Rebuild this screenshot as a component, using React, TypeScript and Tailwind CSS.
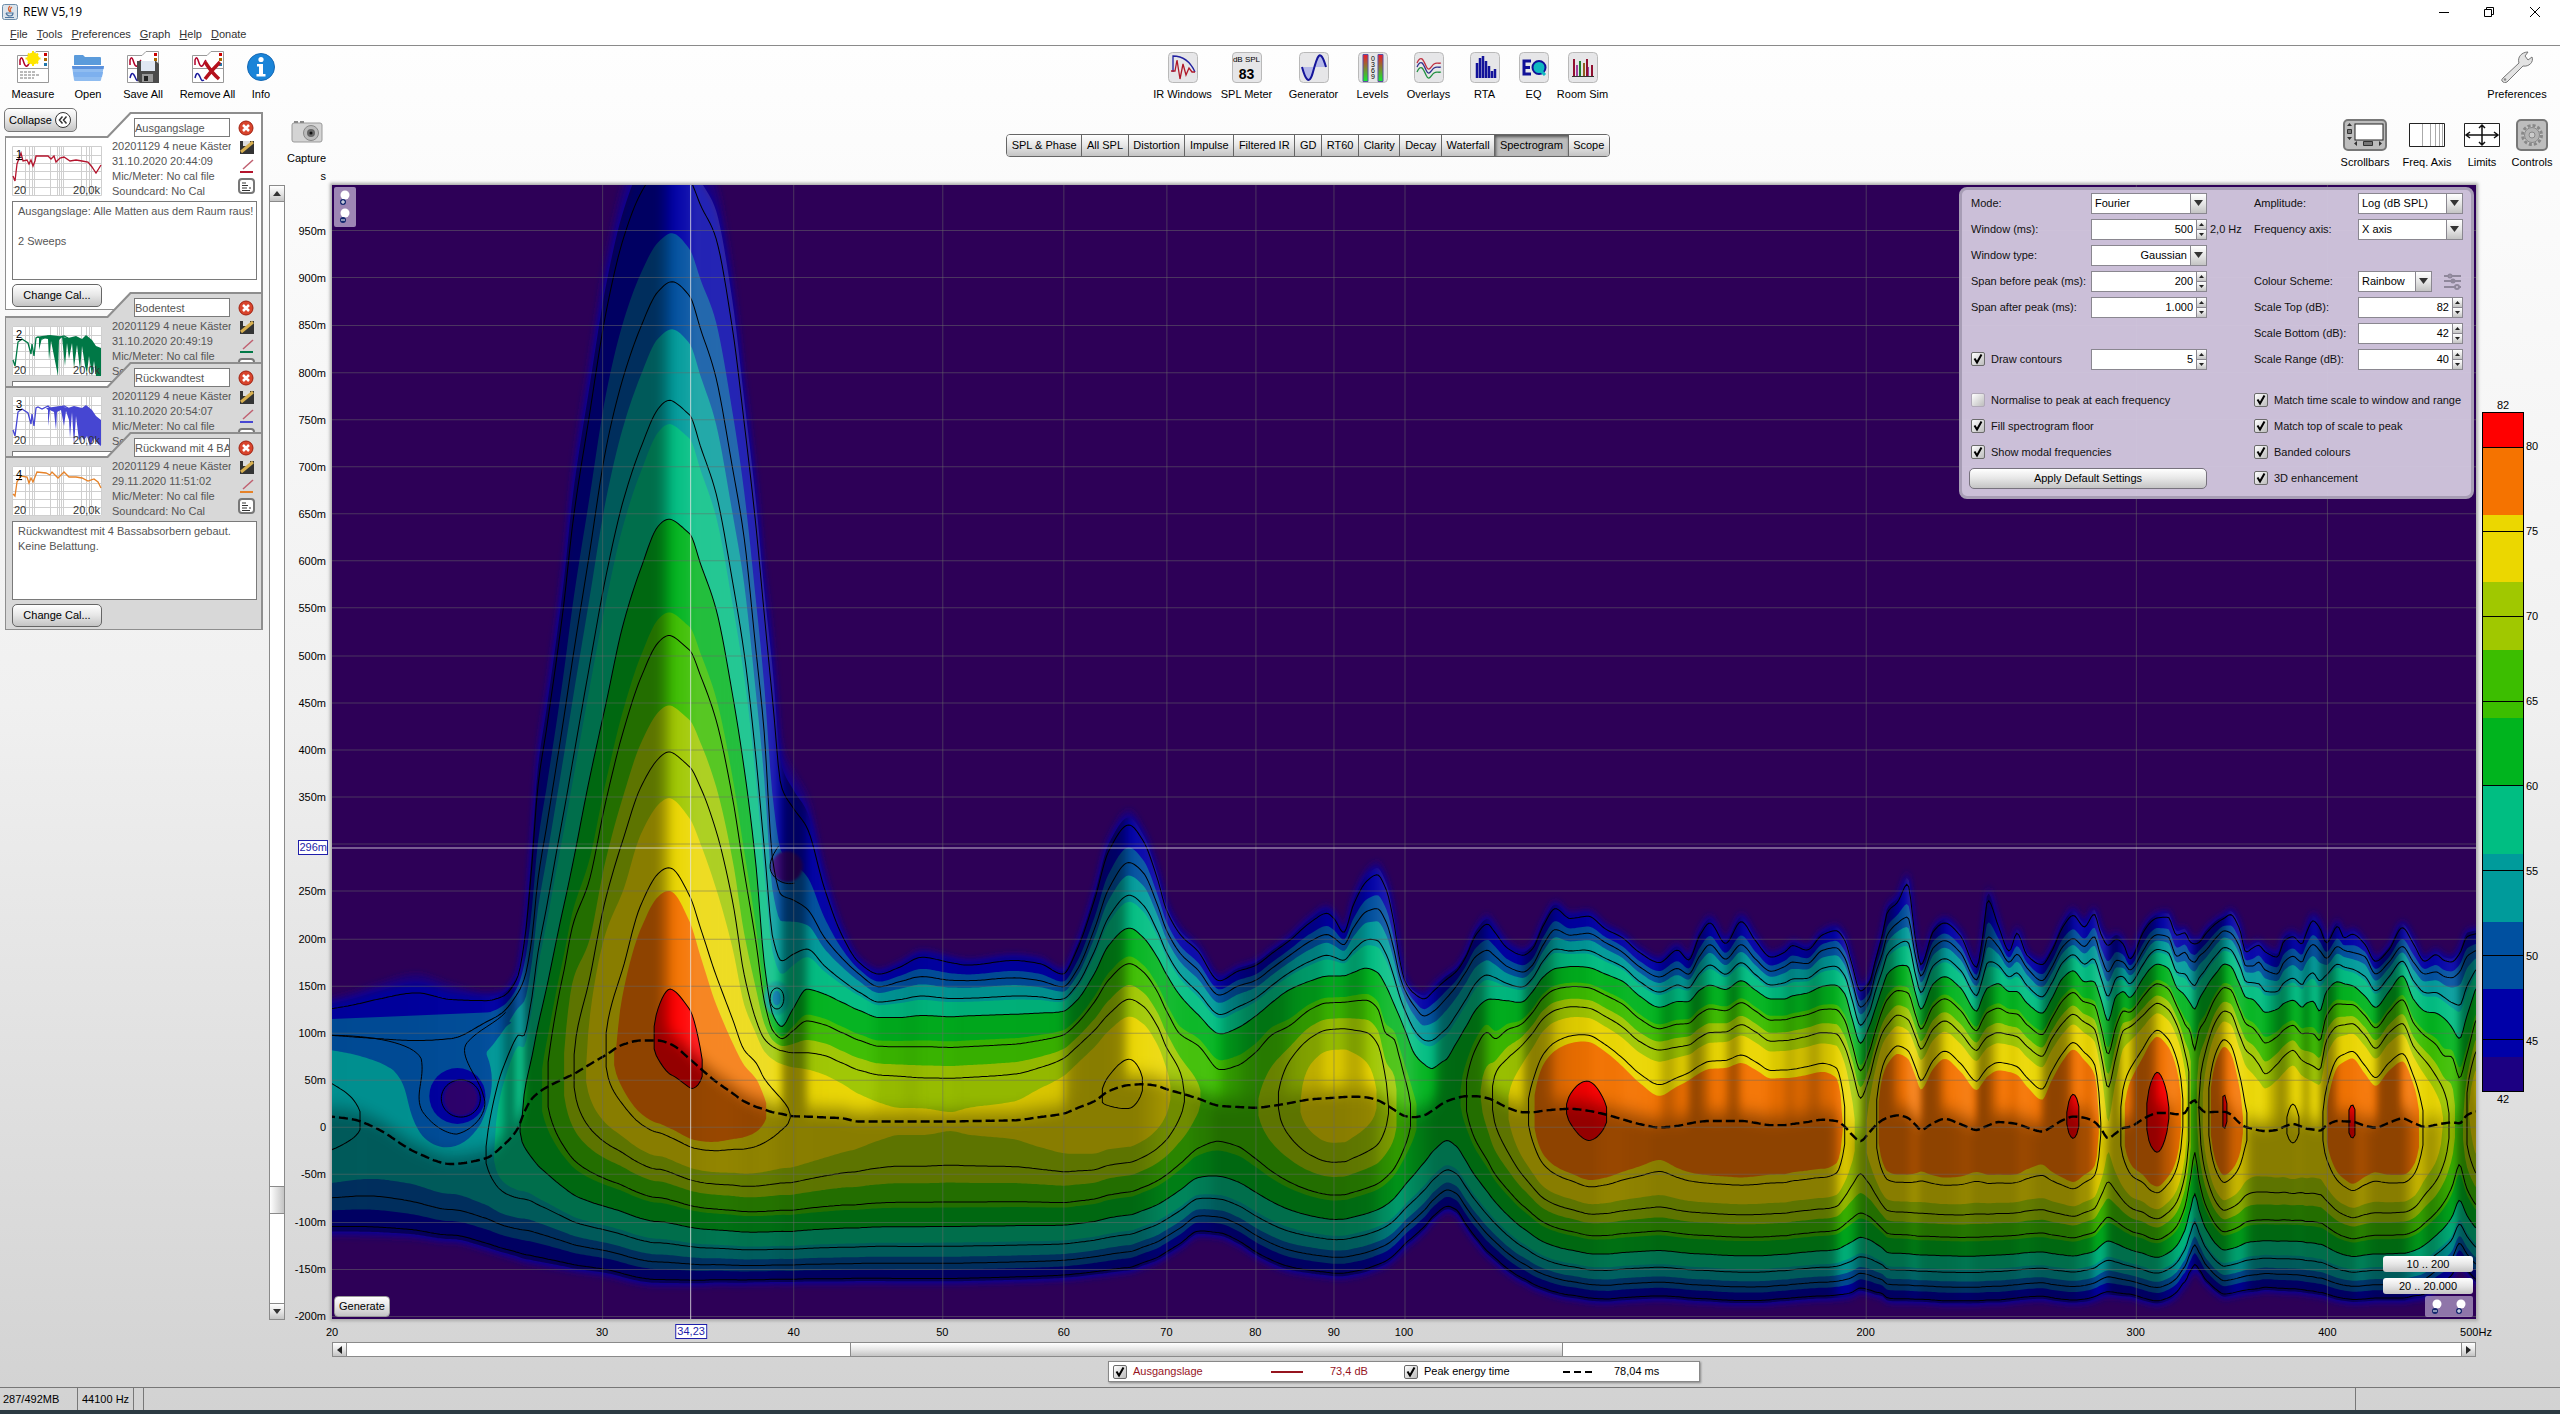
import { useId, type ReactNode } from 'react'

/* ---------- spectrogram data ---------- */

const W = 2143
const H = 1133

// x, ridge, peak dB, top of 43 / 50 / 60 / 70 dB, bottom of 43 dB, top of 76 dB
type Row = number[]
type Tile = { x0: number; y0: number; sx: number; sy: number; rows: Row[] }

const TILES: Tile[] = [
  {
    x0: -13, y0: 594, sx: 1.742, sy: 2.473,
    rows: [
      [22, 833, 56, 540, 632, 0, 0, 1128],
      [60, 840, 55.3, 525, 636, 0, 0, 1129],
      [100, 862, 54.5, 505, 640, 0, 0, 1130],
      [170, 922, 53.5, 480, 645, 0, 0, 1135],
      [230, 950, 53.5, 505, 640, 0, 0, 1145],
      [290, 936, 55, 525, 600, 0, 0, 1165],
      [320, 905, 57.5, 520, 575, 0, 0, 1178],
      [345, 865, 59.5, 475, 530, 0, 0, 1188],
      [358, 820, 61, 360, 490, 770, 0, 1195],
      [370, 790, 62.4, 150, 400, 690, 0, 1198],
      [381, 775, 63.6, -73, 250, 610, 0, 1201],
      [397, 760, 65.1, -230, 110, 510, 0, 1205],
      [425, 740, 68, -530, -140, 320, 0, 1212],
      [443, 728, 70, -780, -310, 200, 0, 1217],
      [470, 705, 72.6, -1030, -550, 5, 500, 1222],
      [500, 680, 75.1, -1290, -820, -190, 290, 1228],
      [529, 655, 77.2, -1469, -990, -380, 150, 1238, 530],
      [560, 645, 79.2, -1580, -1117, -520, 20, 1248, 370],
      [590, 645, 80.2, -1630, -1205, -625, -50, 1252, 290],
      [614, 655, 80.6, -1650, -1230, -642, -67, 1252, 277],
      [645, 690, 80.6, -1600, -1195, -608, -32, 1252, 350],
      [665, 715, 80.1, -1540, -1110, -530, 22, 1252, 440],
      [690, 745, 79.2, -1480, -1000, -428, 120, 1250, 550],
      [720, 775, 78, -1250, -770, -210, 300, 1250, 650],
      [740, 795, 77.3, -1000, -600, -30, 480, 1250, 705],
      [760, 808, 76.7, -760, -330, 200, 590, 1249],
      [775, 815, 76.2, -530, -120, 450, 640, 1249],
      [790, 822, 75.7, -350, 200, 580, 660, 1248],
      [805, 826, 75.3, -90, 285, 610, 670, 1248],
      [826, 832, 74.9, -20, 298, 565, 675, 1248],
      [850, 833, 74.4, 40, 320, 518, 675, 1247],
      [880, 835, 73.8, 220, 390, 530, 682, 1247],
      [910, 837, 73.3, 360, 440, 550, 700, 1247],
      [940, 845, 72.8, 440, 480, 570, 718, 1246],
      [975, 845, 72.4, 468, 512, 588, 730, 1246],
      [1010, 845, 72.2, 450, 500, 588, 733, 1247],
      [1050, 845, 72.2, 420, 487, 583, 737, 1247],
      [1100, 845, 72.1, 435, 496, 586, 738, 1247],
      [1130, 844, 72.2, 443, 497, 584, 736, 1246],
      [1210, 842, 72.4, 430, 490, 580, 728, 1243],
      [1255, 834, 73, 438, 497, 577, 712, 1241],
      [1295, 826, 73.7, 468, 512, 573, 690, 1238],
      [1320, 812, 74.2, 400, 470, 545, 660, 1235],
      [1350, 795, 74.8, 270, 370, 480, 620, 1230],
      [1375, 770, 75.2, 140, 270, 410, 580, 1226],
      [1410, 755, 75.5, 75, 205, 367, 543, 1220],
      [1435, 753, 75, 120, 230, 390, 560, 1208],
      [1460, 757, 73.8, 220, 310, 440, 610, 1195],
      [1475, 765, 72.7, 300, 370, 480, 660, 1182],
      [1500, 775, 70.6, 365, 430, 535, 725, 1160],
      [1530, 788, 68.3, 405, 470, 580, 0, 1130],
    ],
  },
  {
    x0: 867, y0: 634, sx: 2.24, sy: 2.64,
    rows: [
      [45, 755, 66.7, 410, 463, 565, 0, 1105],
      [85, 758, 66.9, 385, 440, 550, 0, 1125],
      [124, 760, 67.8, 370, 425, 520, 0, 1155],
      [165, 755, 69.5, 335, 390, 480, 0, 1180],
      [200, 748, 71, 305, 360, 450, 640, 1195],
      [250, 738, 73, 250, 320, 425, 575, 1205],
      [285, 735, 73.8, 225, 303, 413, 555, 1210],
      [301, 734, 73.9, 240, 312, 413, 553, 1212],
      [323, 732, 73.9, 285, 330, 412, 552, 1212],
      [345, 731, 73.5, 200, 285, 403, 555, 1208],
      [375, 733, 72.8, 130, 242, 392, 562, 1200],
      [398, 740, 72, 110, 235, 403, 590, 1190],
      [418, 752, 70.5, 150, 270, 440, 690, 1180],
      [435, 765, 69, 240, 340, 485, 0, 1165],
      [448, 775, 67.5, 350, 410, 520, 0, 1150],
      [460, 782, 66.2, 415, 450, 555, 0, 1135],
      [480, 785, 64.6, 445, 490, 615, 0, 1115],
      [503, 780, 63.3, 455, 518, 645, 0, 1090],
      [525, 765, 62.6, 430, 505, 655, 0, 1060],
      [550, 745, 62.4, 405, 475, 635, 0, 1037],
      [575, 735, 63.4, 385, 440, 590, 0, 1045],
      [595, 730, 65, 350, 405, 550, 0, 1080],
      [620, 730, 67.3, 280, 360, 500, 0, 1120],
      [645, 735, 69, 248, 345, 475, 0, 1155],
      [660, 742, 70.4, 270, 358, 474, 680, 1170],
      [690, 760, 72, 320, 388, 478, 630, 1200],
      [725, 772, 74.3, 340, 402, 480, 592, 1225],
      [745, 772, 75.8, 325, 385, 455, 565, 1238],
      [770, 768, 78, 260, 330, 415, 525, 1250],
      [797, 765, 79.3, 213, 290, 393, 503, 1260],
      [830, 763, 80.2, 243, 305, 388, 494, 1268],
      [870, 768, 80.9, 237, 300, 390, 497, 1275],
      [910, 778, 80.1, 275, 325, 408, 520, 1278],
      [945, 790, 79, 295, 348, 425, 545, 1275],
      [985, 803, 78, 335, 388, 465, 585, 1272],
      [1030, 812, 77.2, 362, 415, 495, 608, 1270],
      [1070, 808, 78, 325, 393, 480, 600, 1272],
      [1095, 802, 78.6, 355, 408, 480, 595, 1275],
      [1120, 797, 79, 285, 360, 450, 575, 1277],
      [1143, 795, 79.2, 250, 330, 437, 562, 1278],
      [1178, 795, 79.3, 310, 368, 448, 560, 1281],
      [1213, 795, 79.4, 245, 330, 425, 541, 1282],
      [1245, 800, 79.1, 300, 368, 450, 560, 1282],
      [1280, 806, 78.7, 348, 400, 473, 585, 1280],
      [1310, 806, 78.7, 335, 388, 473, 583, 1277],
      [1328, 803, 78.6, 315, 376, 465, 580, 1275],
      [1360, 798, 78.6, 330, 380, 458, 572, 1272],
      [1395, 792, 78.6, 288, 345, 440, 562, 1270],
      [1425, 795, 78, 275, 338, 437, 565, 1268],
      [1445, 810, 75.3, 300, 365, 460, 600, 1266],
      [1460, 830, 73, 360, 420, 520, 655, 1262],
      [1480, 848, 71.3, 435, 495, 590, 735, 1250],
      [1500, 825, 73, 415, 470, 545, 680, 1255],
      [1513, 808, 75, 360, 410, 500, 620, 1260],
      [1530, 792, 78, 280, 350, 440, 560, 1265],
    ],
  },
  {
    x0: 1527, y0: 614, sx: 2.24, sy: 2.554,
    rows: [
      [62, 812, 79, 265, 345, 445, 575, 1285],
      [85, 806, 79.6, 240, 315, 425, 550, 1287],
      [107, 812, 79.4, 182, 300, 425, 560, 1287],
      [125, 830, 78.6, 340, 400, 495, 605, 1288],
      [137, 843, 78, 410, 450, 535, 637, 1288],
      [165, 825, 79, 320, 378, 470, 585, 1290],
      [190, 815, 79.6, 297, 360, 452, 565, 1292],
      [225, 828, 79, 330, 390, 480, 595, 1292],
      [262, 843, 78, 415, 460, 540, 640, 1292],
      [275, 838, 78.3, 330, 410, 505, 620, 1291],
      [287, 832, 78.7, 220, 350, 480, 605, 1290],
      [310, 823, 79, 300, 375, 470, 595, 1290],
      [335, 825, 79, 375, 415, 490, 600, 1287],
      [352, 828, 78.8, 320, 395, 490, 605, 1285],
      [375, 837, 78, 385, 430, 520, 630, 1282],
      [408, 847, 77.3, 405, 462, 545, 655, 1280],
      [430, 835, 78.3, 370, 428, 508, 610, 1284],
      [455, 818, 79.6, 305, 375, 455, 570, 1288],
      [478, 809, 80.5, 272, 355, 437, 548, 1290],
      [503, 812, 79.4, 305, 375, 465, 568, 1288],
      [525, 822, 78.2, 270, 350, 465, 585, 1282],
      [540, 840, 75, 320, 400, 510, 650, 1275],
      [556, 864, 72.2, 345, 440, 565, 735, 1270],
      [575, 850, 74, 335, 410, 500, 650, 1272],
      [590, 838, 76, 350, 415, 490, 590, 1274],
      [605, 835, 77.5, 395, 435, 505, 580, 1275],
      [635, 815, 79.4, 320, 385, 455, 550, 1285],
      [652, 805, 81, 295, 355, 430, 530, 1290],
      [666, 800, 81.6, 285, 345, 420, 520, 1292],
      [690, 800, 80.2, 280, 350, 430, 535, 1285],
      [710, 803, 78, 325, 400, 480, 575, 1270],
      [728, 800, 74, 320, 390, 500, 645, 1245],
      [740, 775, 70.2, 345, 410, 520, 740, 1220],
      [750, 768, 67.2, 350, 415, 535, 0, 1205],
      [760, 785, 70.2, 350, 400, 510, 745, 1215],
      [775, 798, 74, 325, 385, 480, 640, 1240],
      [800, 797, 79, 300, 350, 440, 560, 1265],
      [816, 797, 80.3, 290, 335, 420, 540, 1275],
      [830, 803, 79.5, 275, 340, 425, 545, 1273],
      [850, 825, 77.2, 310, 375, 470, 600, 1268],
      [865, 836, 75.3, 375, 425, 505, 640, 1265],
      [880, 840, 74.7, 360, 425, 510, 655, 1263],
      [893, 844, 74.5, 355, 415, 525, 675, 1261],
      [908, 846, 74.5, 370, 435, 543, 700, 1258],
      [935, 843, 74.7, 385, 445, 535, 675, 1260],
      [950, 835, 74.9, 340, 415, 520, 655, 1261],
      [970, 828, 75.4, 330, 400, 512, 640, 1262],
      [990, 835, 74.9, 350, 415, 530, 665, 1264],
      [1000, 840, 74.8, 320, 390, 520, 672, 1266],
      [1015, 842, 74.6, 285, 370, 515, 680, 1268],
      [1030, 845, 74.6, 305, 385, 540, 690, 1271],
      [1045, 832, 76.2, 350, 405, 490, 615, 1275],
      [1070, 820, 78.9, 303, 375, 465, 578, 1283],
      [1085, 821, 79.7, 340, 385, 470, 575, 1286],
      [1103, 822, 80.3, 325, 390, 475, 572, 1288],
      [1130, 832, 79, 355, 400, 500, 600, 1287],
      [1155, 837, 78.3, 400, 445, 530, 635, 1285],
      [1185, 825, 79, 370, 415, 490, 595, 1285],
      [1215, 814, 79.4, 308, 375, 450, 572, 1285],
      [1240, 825, 78, 350, 415, 510, 630, 1280],
      [1265, 835, 75, 400, 445, 540, 665, 1275],
      [1290, 830, 73.5, 378, 440, 545, 705, 1255],
      [1310, 826, 71.5, 395, 452, 560, 750, 1242],
      [1325, 824, 69.5, 398, 455, 580, 0, 1230],
      [1343, 826, 67, 375, 440, 610, 0, 1190],
      [1360, 805, 71, 330, 400, 550, 745, 1215],
      [1380, 796, 74, 325, 385, 480, 640, 1240],
    ],
  },
]

type Column = { x: number; ridge: number; peak: number; bottom: number; knots: [number, number][] }

const columns: Column[] = TILES.flatMap(t =>
  t.rows.map(r => {
    const y = (v: number) => t.y0 + v / t.sy
    const ridge = y(r[1])
    const peak = r[2]
    const knots = ([[76, r[8] ?? 0], [70, r[6]], [60, r[5]], [50, r[4]], [43, r[3]]] as [number, number][])
      .filter(([level, v]) => v !== 0 && level < peak - 0.3)
      .map(([level, v]) => [level, ridge - y(v)] as [number, number])
    return { x: t.x0 + r[0] / t.sx, ridge, peak, bottom: y(r[7]), knots }
  }),
)

// monotone cubic through the given points
function curve(xs: number[], ys: number[]) {
  const n = xs.length
  const d: number[] = []
  for (let i = 0; i < n - 1; i++) d.push((ys[i + 1] - ys[i]) / (xs[i + 1] - xs[i]))
  const m = ys.map((_, i) => {
    if (i === 0) return d[0]
    if (i === n - 1) return d[n - 2]
    if (d[i - 1] * d[i] <= 0) return 0
    return (2 * d[i - 1] * d[i]) / (d[i - 1] + d[i])
  })
  return (x: number) => {
    const cx = Math.min(xs[n - 1], Math.max(xs[0], x))
    let i = 0
    while (i < n - 2 && xs[i + 1] < cx) i++
    const h = xs[i + 1] - xs[i]
    const t = (cx - xs[i]) / h
    const t2 = t * t
    const t3 = t2 * t
    return (2 * t3 - 3 * t2 + 1) * ys[i] + (t3 - 2 * t2 + t) * h * m[i] + (3 * t2 - 2 * t3) * ys[i + 1] + (t3 - t2) * h * m[i + 1]
  }
}

// squared distance above the ridge at which a column falls to the level
function above(c: Column, level: number) {
  const [l0, e0] = c.knots[0]
  if (level >= l0) return ((c.peak - level) * e0 * e0) / (c.peak - l0)
  for (let i = 1; i < c.knots.length; i++) {
    const [la, ea] = c.knots[i - 1]
    const [lb, eb] = c.knots[i]
    if (level >= lb) {
      const e = ea + ((eb - ea) * (la - level)) / (la - lb)
      return e * e
    }
  }
  const last = c.knots[c.knots.length - 1]
  return last[1] * last[1]
}

function below(c: Column, level: number) {
  const e = c.bottom - c.ridge
  return (e * e * (c.peak - level)) / (c.peak - 43)
}

const STEP = 2
const xs = columns.map(c => c.x)
const ridgeAt = curve(xs, columns.map(c => c.ridge))
const peakAt = curve(xs, columns.map(c => c.peak))
const samples: number[] = []
for (let x = -6; x <= W + 6; x += STEP) samples.push(x)

function topCurve(level: number) {
  if (level <= 52) {
    const f = curve(xs, columns.map(c => c.ridge - Math.sqrt(Math.max(0, above(c, level)))))
    return (x: number) => Math.pow(ridgeAt(x) - f(x), 2)
  }
  return curve(xs, columns.map(c => above(c, level)))
}

function levelPath(level: number) {
  const up = topCurve(level)
  const down = curve(xs, columns.map(c => below(c, level)))
  let path = ''
  let top: string[] = []
  let bottom: string[] = []
  const flush = () => {
    if (top.length > 2) path += `M${top.join('L')}L${bottom.reverse().join('L')}Z`
    top = []
    bottom = []
  }
  for (const x of samples) {
    const u = up(x)
    const d = down(x)
    if (u <= 0 && d <= 0) { flush(); continue }
    const r = ridgeAt(x)
    top.push(`${x} ${(r - Math.sqrt(Math.max(0, u))).toFixed(1)}`)
    bottom.push(`${x} ${(r + Math.sqrt(Math.max(0, d))).toFixed(1)}`)
  }
  flush()
  return path
}

const BANDS: [number, string][] = [
  [43, '#1c0078'], [44, '#0000a8'], [48, '#0050a0'], [52, '#009b9b'], [56, '#00be82'],
  [60, '#00b41e'], [64, '#3cbe00'], [68, '#a0c800'], [72, '#ebd700'], [76, '#f57300'], [80, '#ff0000'],
]
const bandPaths = BANDS.map(([level, color]) => ({ level, color, d: levelPath(level) }))
const contourPaths = [45, 50, 55, 60, 65, 70, 75, 80].map(levelPath)
const ridgeLine = 'M' + samples.map(x => `${x} ${ridgeAt(x).toFixed(1)}`).join('L')
const shadeLine = 'M' + samples.map(x => `${x} ${(ridgeAt(x) - 8).toFixed(1)}`).join('L')
const aboveRidge = `${shadeLine}L${W + 6} -20L-6 -20Z`
const belowRidge = `${shadeLine}L${W + 6} ${H + 20}L-6 ${H + 20}Z`

// relief: light falls from the upper right
const reliefTop = curve(xs, columns.map(c => c.ridge - Math.sqrt(Math.max(0, above(c, Math.min(60, c.peak - 2))))))
const reliefStops = samples.filter((_, i) => i % 2 === 0).map(x => {
  const slope = (reliefTop(x + 4) - reliefTop(x - 4)) / 8
  const fall = (peakAt(x - 4) - peakAt(x + 4)) / 8
  return {
    offset: Math.min(1, Math.max(0, x / W)),
    dark: 0.21 * (1 - Math.tanh(slope * 2 + 0.8)),
    light: Math.max(0, Math.min(0.14, slope * 0.05)),
    lower: 0.42 - 0.36 * Math.max(0, Math.min(1, fall * 3 - 0.1)),
  }
})

const xOfHz = (hz: number) => Math.log(hz / 20) / Math.log(25)
const HZ = [20, 30, 40, 50, 60, 70, 80, 90, 100, 200, 300, 400, 500]
const TIMES = Array.from({ length: 24 }, (_, i) => 950 - i * 50)

function Spectrogram() {
  return (
    <svg viewBox={`0 0 ${W} ${H}`} preserveAspectRatio="none" className="block h-full w-full bg-[#2d0057]" aria-label="Spectrogram">
      <defs>
        {(['dark', 'light', 'lower'] as const).map(key => (
          <linearGradient key={key} id={`relief-${key}`} gradientUnits="userSpaceOnUse" x1="0" x2={W} y1="0" y2="0">
            {reliefStops.map((s, i) => (
              <stop key={i} offset={s.offset} stopColor={key === 'light' ? '#fff' : '#000'} stopOpacity={s[key].toFixed(3)} />
            ))}
          </linearGradient>
        ))}
        <clipPath id="lit"><path d={bandPaths[1].d} /></clipPath>
        <filter id="soft" x="-2%" y="-2%" width="104%" height="104%"><feGaussianBlur stdDeviation="3 9" /></filter>
        <filter id="haze"><feGaussianBlur stdDeviation="3" /></filter>
      </defs>
      {bandPaths.map(b => (
        <path key={b.level} d={b.d} fill={b.color} filter={b.level < 45 ? 'url(#haze)' : undefined} />
      ))}

      {/* cancellation notches around 24 Hz and 39 Hz */}
      <g transform="translate(-13 594) scale(.574 .4044)">
        <path d="M20 592L300 575L335 600C300 640 292 650 292 680C310 740 298 800 282 850C250 925 205 920 180 880C140 800 170 740 100 690Q60 668 20 662Z" fill="#0050a0" />
        <ellipse cx="241" cy="782" rx="49" ry="69" fill="#0000a8" />
        <ellipse cx="247" cy="787" rx="30" ry="44" fill="#2d0070" filter="url(#haze)" />
        <ellipse cx="815" cy="215" rx="27" ry="38" fill="#2d0070" filter="url(#haze)" />
        <ellipse cx="797" cy="540" rx="22" ry="42" fill="#00a08c" filter="url(#haze)" />
        <ellipse cx="797" cy="540" rx="7" ry="18" fill="#0078a8" />
      </g>

      <g clipPath="url(#lit)">
        <g filter="url(#soft)">
          <path d={aboveRidge} fill="url(#relief-dark)" />
          <path d={belowRidge} fill="url(#relief-lower)" />
        </g>
        <g filter="url(#soft)"><path d={aboveRidge} fill="url(#relief-light)" /></g>
      </g>

      <g fill="none" stroke="#000">
        {contourPaths.map((d, i) => <path key={i} d={d} />)}
        <g transform="translate(-13 594) scale(.574 .4044)">
          {['M246 742a34 46 0 1 0 2 0Z', 'M20 632C90 632 165 650 178 690C185 740 165 780 180 820C200 860 225 876 240 876C270 866 298 820 286 780C280 740 240 680 258 650C275 620 310 600 325 575',
            'M800 165C788 190 780 215 790 235C800 255 815 260 828 256', 'M797 515a12 26 0 1 0 1 0Z'].map(d => (
            <path key={d} d={d} vectorEffect="non-scaling-stroke" />
          ))}
        </g>
      </g>
      <path d={ridgeLine} fill="none" stroke="#000" strokeWidth="2.4" strokeDasharray="9 4" />

      <g stroke="#6a6a6a" strokeOpacity=".5">
        {HZ.slice(1, -1).map(hz => <path key={hz} d={`M${Math.round(xOfHz(hz) * W) + 0.5} 0V${H}`} />)}
        {TIMES.map(t => <path key={t} d={`M0 ${Math.round(45.2 + (950 - t) * 0.9432) + 0.5}H${W}`} />)}
      </g>
      <path d={`M0 662.5H${W}M358.5 0V${H}`} stroke="#e6e6e6" strokeOpacity=".8" />
    </svg>
  )
}

/* ---------- small controls ---------- */

const FACE = 'bg-linear-to-b from-white via-[#e6e6e6] to-[#c4c4c4]'

function Tick({ checked = true, children, className = '' }: { checked?: boolean; children: ReactNode; className?: string }) {
  return (
    <label className={`flex items-center gap-1.5 whitespace-nowrap ${className}`}>
      <span className="relative size-3.5 shrink-0">
        <input type="checkbox" defaultChecked={checked} className="peer block size-3.5 appearance-none rounded-xs border border-[#6b6b6b] bg-linear-to-br from-white to-[#bdbdbd] not-checked:border-[#b0a8b8]" />
        <svg viewBox="0 0 14 14" className="pointer-events-none absolute inset-0 hidden peer-checked:block">
          <path d="M3.5 6.5L6 10.5L10.5 2.5" fill="none" stroke="#000" strokeWidth="2" />
        </svg>
      </span>
      {children}
    </label>
  )
}

function Select({ id, value, right = false, className = '' }: { id: string; value: string; right?: boolean; className?: string }) {
  return (
    <div className={`flex h-[21px] border border-[#8a8790] bg-white ${className}`}>
      <select id={id} className={`min-w-0 flex-1 appearance-none bg-white pl-[3px] text-black outline-none ${right ? 'pr-[3px] text-right [text-align-last:right]' : ''}`}>
        <option>{value}</option>
      </select>
      <span className={`pointer-events-none grid w-4 place-items-center border-l border-[#8a8790] ${FACE}`}>
        <svg width="9" height="6"><path d="M0 0h9L4.500 6z" fill="#333" /></svg>
      </span>
    </div>
  )
}

function Spinner({ id, value }: { id: string; value: string }) {
  return (
    <div className="flex h-[21px] border border-[#8a8790] bg-white">
      <input id={id} type="text" defaultValue={value} className="w-0 min-w-0 flex-1 bg-white pr-[3px] text-right text-black outline-none" />
      <span className="flex w-2.5 flex-col border-l border-[#8a8790]">
        <button aria-label="Increase" className={`grid flex-1 place-items-center border-b border-[#8a8790] ${FACE}`}>
          <svg width="5" height="3"><path d="M0 3h5L2.500 0z" fill="#222" /></svg>
        </button>
        <button aria-label="Decrease" className={`grid flex-1 place-items-center ${FACE}`}>
          <svg width="5" height="3"><path d="M0 0h5L2.500 3z" fill="#222" /></svg>
        </button>
      </span>
    </div>
  )
}

function ControlsPanel() {
  const id = useId()
  return (
    <div className="absolute top-0.5 right-0.5 rounded-lg border-[3px] border-[#a79db5] bg-[#d4c9df]/95 pr-[8px] pb-[5px] pl-[9px] text-[#111]">
      <div className="grid auto-rows-[26px] grid-cols-[120px_116px_47px_104px_105px] items-center">
        <label htmlFor={`${id}m`}>Mode:</label>
        <Select id={`${id}m`} value="Fourier" />
        <span />
        <label htmlFor={`${id}a`}>Amplitude:</label>
        <Select id={`${id}a`} value="Log (dB SPL)" />

        <label htmlFor={`${id}w`}>Window (ms):</label>
        <Spinner id={`${id}w`} value="500" />
        <span className="pl-[3px] whitespace-nowrap">2,0 Hz</span>
        <label htmlFor={`${id}f`}>Frequency axis:</label>
        <Select id={`${id}f`} value="X axis" />

        <label htmlFor={`${id}t`}>Window type:</label>
        <Select id={`${id}t`} value="Gaussian" right />
        <span className="col-span-3" />

        <label htmlFor={`${id}b`}>Span before peak (ms):</label>
        <Spinner id={`${id}b`} value="200" />
        <span />
        <label htmlFor={`${id}c`}>Colour Scheme:</label>
        <div className="flex items-center justify-between">
          <Select id={`${id}c`} value="Rainbow" className="w-[74px]" />
          <button aria-label="Colour settings" className="pr-0.5">
            <svg width="17" height="18" fill="none" stroke="#8f879b" strokeWidth="2">
              <path d="M0 4h17M0 9h17M0 15h17" /><circle cx="6" cy="4" r="1.500" fill="#cdc1d8" /><circle cx="9" cy="9" r="1.500" /><circle cx="13" cy="15" r="2" fill="#cdc1d8" />
            </svg>
          </button>
        </div>

        <label htmlFor={`${id}s`}>Span after peak (ms):</label>
        <Spinner id={`${id}s`} value="1.000" />
        <span />
        <label htmlFor={`${id}u`}>Scale Top (dB):</label>
        <Spinner id={`${id}u`} value="82" />

        <span className="col-span-3" />
        <label htmlFor={`${id}d`}>Scale Bottom (dB):</label>
        <Spinner id={`${id}d`} value="42" />

        <Tick>Draw contours</Tick>
        <Spinner id={`${id}n`} value="5" />
        <span />
        <label htmlFor={`${id}r`}>Scale Range (dB):</label>
        <Spinner id={`${id}r`} value="40" />
      </div>
      <div className="mt-[15px] grid auto-rows-[26px] grid-cols-[283px_1fr] items-center">
        <Tick checked={false}>Normalise to peak at each frequency</Tick>
        <Tick>Match time scale to window and range</Tick>
        <Tick>Fill spectrogram floor</Tick>
        <Tick>Match top of scale to peak</Tick>
        <Tick>Show modal frequencies</Tick>
        <Tick>Banded colours</Tick>
        <button className={`-ml-0.5 h-[21px] w-[238px] rounded-[5px] border border-[#77727d] text-black ${FACE}`}>Apply Default Settings</button>
        <Tick>3D enhancement</Tick>
      </div>
    </div>
  )
}

/* ---------- toolbar ---------- */

function SheetIcon({ kind }: { kind: 'new' | 'save' | 'remove' }) {
  return (
    <svg width="32" height="32" viewBox="0 0 32 32">
      <path d="M.5 4.500H15L19 .5H31.500V31.500H.5z" fill="#fff" stroke="#999" />
      <path d="M.5 17.500H31" stroke="#999" />
      <path d="M3 14V9c1-3 2-3 3 0s2 7 4 6 2-4 4-6" fill="none" stroke="#b00028" strokeWidth="1.500" />
      {kind !== 'new' && <path d="M3 27c1-4 2-6 4-3s2 7 5 5" fill="none" stroke="#1c1c9c" strokeWidth="1.500" />}
      {kind === 'new' && <path d="M3 21h16M3 24h20M3 27h14" stroke="#777" strokeDasharray="3 1" />}
      <path d="M28.500 2v3" stroke="#c00" strokeWidth="3" /><path d="M28.500 7v3" stroke="#a60" strokeWidth="3" /><path d="M28.500 12v3" stroke="#27a" strokeWidth="3" />
      {kind === 'new' && <><circle cx="16" cy="7.500" r="6" fill="#ffe600" /><path d="M16 0v15M8.500 7.500h15M11 2.500l10 10M21 2.500l-10 10" stroke="#ffe600" strokeWidth="2" /></>}
      {kind === 'save' && <><path d="M10 10H29L32 13V32H13L10 29z" fill="#4a4a4a" /><path d="M14 10H28V20H14z" fill="#dfe6f2" /><path d="M15 23H26V31H15z" fill="#999" /><path d="M17 25h4v5h-4z" fill="#222" /></>}
      {kind === 'remove' && <path d="M13 11Q20 22 27 28M28 11Q19 20 13 28" fill="none" stroke="#b4101c" strokeWidth="3.500" />}
    </svg>
  )
}

function Tool({ label, icon, className = '' }: { label: string; icon: ReactNode; className?: string }) {
  return (
    <button className={`flex flex-col items-center whitespace-nowrap ${className}`}>
      <span className="grid h-8 place-items-center">{icon}</span>
      <span className="mt-1 leading-[14px]">{label}</span>
    </button>
  )
}

function Tile({ children }: { children: ReactNode }) {
  return (
    <svg width="30" height="31" viewBox="0 0 30 31" fill="none">
      <rect x=".5" y=".5" width="29" height="30" rx="4" fill="#e6e6e8" stroke="#b9b9b9" />
      {children}
    </svg>
  )
}

function Toolbar() {
  return (
    <div className="flex h-[62px] items-start justify-between border-t border-[#8a8a8a] pt-[5px]">
      <div className="flex pl-[5px]">
        <Tool label="Measure" className="w-14" icon={<SheetIcon kind="new" />} />
        <Tool label="Open" className="w-[54px]" icon={
          <svg width="32" height="32"><path d="M2 14V5q0-1 1-1h8l2 2h15q1 0 1 1v7z" fill="#5b9bdb" /><path d="M0 15h32l-3 14q0 1-1 1H3q-1 0-1-1z" fill="#8fbcf0" /><path d="M0 15h32l-.5 3H.6z" fill="#5a90dc" /><path d="M1 21h30l-1 5H2z" fill="#7db0ee" /></svg>
        } />
        <Tool label="Save All" className="w-14" icon={<SheetIcon kind="save" />} />
        <Tool label="Remove All" className="w-[73px]" icon={<SheetIcon kind="remove" />} />
        <Tool label="Info" className="w-[34px]" icon={
          <svg width="28" height="28"><circle cx="14" cy="14" r="13.500" fill="#1a84d8" stroke="#1668b4" /><circle cx="14" cy="6.500" r="2.600" fill="#fff" /><path d="M10 11h6v10h2.500v2.500h-9V21H12v-7.500h-2z" fill="#fff" /></svg>
        } />
      </div>
      <div className="ml-[5px] flex">
        <Tool label="IR Windows" className="w-16" icon={<Tile><path d="M5 20V4C15 4 22 9 27 20" stroke="#2020a0" strokeWidth="1.300" /><path d="M3 19h4L9 8l3 19 3-15 3 11 3-7 3 4h3" stroke="#b01828" strokeWidth="1.300" /></Tile>} />
        <Tool label="SPL Meter" className="w-16" icon={
          <span className="flex h-[31px] w-[30px] flex-col items-center rounded border border-[#b9b9b9] bg-[#e6e6e8]">
            <span className="text-[8px] leading-[14px]">dB SPL</span><span className="text-[14px] leading-[14px] font-bold">83</span>
          </span>
        } />
        <Tool label="Generator" className="w-[70px]" icon={<Tile><path d="M3 15C6 26 10 35 14 20S22-6 27 15z" fill="#b4b8e8" /><path d="M3 15C6 26 10 35 14 20S21-6 27 15" stroke="#14149a" strokeWidth="2" /></Tile>} />
        <Tool label="Levels" className="w-12" icon={
          <svg width="30" height="31" viewBox="0 0 30 31">
            <defs><linearGradient id="meter" x2="0" y2="1"><stop stopColor="#f01830" /><stop offset="1" stopColor="#10f030" /></linearGradient></defs>
            <rect x=".5" y=".5" width="29" height="30" rx="4" fill="#e6e6e8" stroke="#b9b9b9" />
            <path d="M5 2.500h5v27H5zM20 2.500h5v27h-5z" fill="url(#meter)" stroke="#5a50a0" />
            {['0', '3', '6', '9'].map((n, i) => <text key={n} x="13" y={9 + i * 6} fontSize="7">{n}</text>)}
          </svg>
        } />
        <Tool label="Overlays" className="w-16" icon={<Tile><path d="M3 11c4-8 6-4 9 3s5 0 8-2 4 0 7-1" stroke="#c03040" strokeWidth="1.300" /><path d="M3 15c4-8 6-4 9 3s5 0 8-2 4 0 7-1" stroke="#30308c" strokeWidth="1.300" /><path d="M3 20c4-8 6-4 9 3s5 0 8-2 4 0 7-1" stroke="#209040" strokeWidth="1.300" /></Tile>} />
        <Tool label="RTA" className="w-12" icon={<Tile><path d="M7 26V11M10 26V6M13 26V4M16 26V9M19 26V14M22 26V19M25 26V17" stroke="#14149a" strokeWidth="2.500" /></Tile>} />
        <Tool label="EQ" className="w-[50px]" icon={
          <svg width="30" height="31" viewBox="0 0 30 31" fill="none"><rect x=".5" y=".5" width="29" height="30" rx="4" fill="#e6e6e8" stroke="#b9b9b9" /><path d="M12 9H5v13h7M5 15.500h6" stroke="#101098" strokeWidth="3" /><circle cx="20" cy="15.500" r="6.500" fill="#10b8c0" stroke="#101098" strokeWidth="2" /><path d="M20 17l6 6" stroke="#10b8c0" strokeWidth="3" /></svg>
        } />
        <Tool label="Room Sim" className="w-12" icon={<Tile><path d="M4 24.500h22" stroke="#333" /><path d="M6 24V7" stroke="#901030" strokeWidth="2" /><path d="M9 24V13M20 24V15" stroke="#a040a0" strokeWidth="2" /><path d="M12 24V9" stroke="#208030" strokeWidth="2" /><path d="M16 24V11" stroke="#906020" strokeWidth="2" /><path d="M19 24V7M24 24V13" stroke="#901030" strokeWidth="2" /></Tile>} />
      </div>
      <Tool label="Preferences" className="w-[86px]" icon={
        <svg width="34" height="32" viewBox="0 0 34 32"><path d="M3 27L19 12C17 6 22 1 28 1L25 5 28 9 32 6C34 11 29 16 23 15L7 31Q4 33 2 30 1 29 3 27z" fill="#e3e3e3" stroke="#777" /><circle cx="5" cy="28.500" r="1.300" fill="#888" /></svg>
      } />
    </div>
  )
}

/* ---------- measurements ---------- */

type Measurement = {
  index: number
  name: string
  date: string
  color: string
  active?: boolean
  note?: string
  trace: string
  fill?: string
}

const MEASUREMENTS: Measurement[] = [
  {
    index: 1, name: 'Ausgangslage', date: '31.10.2020 20:44:09', color: '#b4142d', active: true,
    note: 'Ausgangslage: Alle Matten aus dem Raum raus!\n\n2 Sweeps',
    trace: 'M1 30L3 35L5 18L9 7L11 15L15 14L17 18L19 14L21 20L23 15L24 10L36 10L39 13L42 10L44 16L48 12L52 11L58 15L64 14L70 15L76 16L80 21L84 27L89 19',
  },
  {
    index: 2, name: 'Bodentest', date: '31.10.2020 20:49:19', color: '#007846',
    trace: 'M1 34L3 40L6 16L10 13L16 17L19 28L20 18L22 30L24 12L26 11L30 13L36 10L40 14L44 12L52 10L56 12L60 16L66 12',
    fill: 'M24 11L27 12V24L30 12L36 13L37 34L39 15L46 50L47 14L50 11L53 40L55 17L57 33L60 17L62 42L65 19L68 44L70 20L73 40L75 47L77 30L80 50L82 35L84 50H89V22L84 20L80 14L74 9L70 13L64 10L56 12L46 10L38 9L30 10z',
  },
  {
    index: 3, name: 'Rückwandtest', date: '31.10.2020 20:54:07', color: '#4646d2',
    trace: 'M1 34L3 40L6 16L10 13L16 17L19 28L20 18L22 30L24 12L26 11L30 13L36 10L40 14L44 12L52 10L56 12L60 16L66 12',
    fill: 'M34 12L36 14V30L38 14L42 16L44 34L45 16L49 14L52 30L54 15L57 24L58 42L60 16L62 50L64 20L67 45L69 40L72 44L75 40L78 50L82 42L86 48L89 50V24L84 20L80 14L74 9L70 12L62 10L56 12L48 10z',
  },
  {
    index: 4, name: 'Rückwand mit 4 BA', date: '29.11.2020 11:51:02', color: '#e68228',
    note: 'Rückwandtest mit 4 Bassabsorbern gebaut.\nKeine Belattung.',
    trace: 'M1 28L3 30L5 16L9 10L15 11L17 17L19 12L21 16L25 6L34 7L38 9L40 6L46 12L52 6L57 11L64 11L70 12L76 15L82 13L86 16L89 22',
  },
]

function MeasurementCard({ m }: { m: Measurement }) {
  return (
    <article className="relative h-[198px] w-[258px] bg-[#8e8e8e] [clip-path:polygon(0_24px,102px_24px,125px_0,100%_0,100%_100%,0_100%)] not-first:-mt-[18px] [&:nth-child(n+3)]:-mt-[128px]">
      <div className={`h-full w-full [clip-path:polygon(1px_26px,103px_26px,126px_2px,256px_2px,256px_197px,1px_197px)] ${m.active ? 'bg-white' : 'bg-[#d8d8d8]'}`}>
        <div className="flex items-center pt-1.5 pl-[129px]">
          <input aria-label="Measurement name" defaultValue={m.name} className="h-[19px] w-24 border border-[#7a7a7a] bg-white text-[#555] outline-none" />
          <button aria-label="Remove" className="ml-[8px]">
            <svg width="16" height="16"><circle cx="8" cy="8" r="7" fill="#d8442c" stroke="#a02010" /><path d="M5 5l6 6M11 5l-6 6" stroke="#fff" strokeWidth="2.500" /></svg>
          </button>
        </div>
        <div className="flex pt-[2px] pl-[7px]">
          <svg width="90" height="50" viewBox="0 0 90 50" className="mt-[7px] bg-white">
            <path d="M.5.5h89v49H.5zM0 9.500h90M0 17.500h90M0 25.500h90M0 33.500h90M0 41.500h90M13.500 0v50M17.500 0v50M20.500 0v50M22.500 0v50M38.500 0v50M45.500 0v50M47.500 0v50M49.500 0v50M51.500 0v50M69.500 0v50M74.500 0v50M77.500 0v50M79.500 0v50" fill="none" stroke="#cfcfcf" />
            {m.fill && <path d={m.fill} fill={m.color} />}
            <path d={m.trace} fill="none" stroke={m.color} strokeWidth="1.300" />
            <text x="4" y="12" fontSize="11" textDecoration="underline">{m.index}</text>
            <text x="2" y="48" fontSize="11" fill="#333">20</text>
            <text x="88" y="48" fontSize="11" fill="#333" textAnchor="end">20,0k</text>
          </svg>
          <div className="ml-2.5 w-[119px] overflow-hidden leading-[15px] whitespace-nowrap text-[#555]">
            <p>20201129 4 neue Käster</p>
            <p>{m.date}</p>
            <p>Mic/Meter: No cal file</p>
            <p>Soundcard: No Cal</p>
          </div>
          <div className="ml-[7px] flex flex-col items-center gap-1 pt-[1px]">
            <svg width="16" height="15"><path d="M1 1h14v13H1z" fill="#333" /><path d="M4 1h7v5H4z" fill="#ddd" /><path d="M2 12L14 2" stroke="#d8b050" strokeWidth="3" /></svg>
            <svg width="16" height="15"><path d="M4 10L14 1" stroke="#c06070" strokeWidth="1.500" /><path d="M1 13h13" stroke={m.color} strokeWidth="2" /></svg>
            <svg width="17" height="16"><rect x="1" y="1" width="15" height="14" rx="3" fill="#fff" stroke="#777" strokeWidth="2" /><path d="M4 5h4M4 7.500h6M4 10h5M11 10h2M4 12.500h8" stroke="#333" /></svg>
          </div>
        </div>
        <textarea aria-label="Notes" defaultValue={m.note} className="mt-0.5 ml-[7px] block h-[79px] w-[245px] resize-none overflow-hidden border border-[#7a7a7a] bg-white pt-0.5 pr-0 pl-[5px] leading-[15px] text-[#555] outline-none" />
        <button className={`mt-1 ml-[7px] h-[23px] w-[90px] rounded-[5px] border border-[#666] text-black ${FACE}`}>Change Cal...</button>
      </div>
    </article>
  )
}

function Sidebar() {
  return (
    <aside className="w-[264px] shrink-0 pl-[5px]">
      <button className={`relative z-10 mt-px -ml-px flex h-6 w-[73px] items-center justify-between rounded-[5px] border border-[#777] pr-[5px] pl-1 ${FACE}`}>
        Collapse
        <svg width="16" height="16" fill="none" stroke="#333"><circle cx="8" cy="8" r="7.500" fill="#fff" /><path d="M7.500 4.500L4.500 8l3 3.500M11.500 4.500L8.500 8l3 3.500" strokeWidth="1.500" /></svg>
      </button>
      <div className="-mt-5">
        {MEASUREMENTS.map(m => <MeasurementCard key={m.index} m={m} />)}
      </div>
    </aside>
  )
}

/* ---------- graph area ---------- */

const TABS = ['SPL & Phase', 'All SPL', 'Distortion', 'Impulse', 'Filtered IR', 'GD', 'RT60', 'Clarity', 'Decay', 'Waterfall', 'Spectrogram', 'Scope']

function GraphHeader() {
  return (
    <div className="flex h-[78px] items-start justify-between">
      <div className="w-[46px] pt-2">
        <Tool label="Capture" icon={
          <svg width="32" height="24"><rect x="1" y="4" width="30" height="19" rx="2" fill="#d4d4d4" stroke="#999" /><path d="M3 3h4M9 3h4" stroke="#888" strokeWidth="2" /><circle cx="20" cy="14" r="7.500" fill="#bbb" stroke="#888" /><circle cx="20" cy="14" r="4" fill="#666" /><circle cx="20" cy="14" r="1.500" fill="#111" /></svg>
        } />
        <p className="mt-1 pr-[7px] text-right leading-[14px]">s</p>
      </div>
      <nav className="mt-[27px] flex h-[23px] w-[604px] overflow-hidden rounded-[4px] border border-[#666]">
        {TABS.map(tab => (
          <button key={tab} className={`flex-auto border-l border-[#666] px-1 whitespace-nowrap first:border-l-0 ${tab === 'Spectrogram' ? 'bg-[#bcbcbc] shadow-[inset_1px_2px_3px_#555]' : FACE}`}>{tab}</button>
        ))}
      </nav>
      <div className="flex pt-[12px] pr-px pl-[52px]">
        <Tool label="Scrollbars" className="w-[60px]" icon={
          <svg width="44" height="32"><rect x="1" y="1" width="42" height="30" rx="4" fill="#bdbdbd" stroke="#777" strokeWidth="2" /><rect x="12" y="5" width="28" height="16" fill="#fff" stroke="#222" /><path d="M4 7l2.500-3L9 7zM4 18l2.500 3L9 18zM14 22v5l-3-2.500zM36 22v5l3-2.500z" fill="#333" /><path d="M4.500 10.500h4v4h-4zM20.500 22.500h9v4h-9z" fill="#777" stroke="#333" /></svg>
        } />
        <Tool label="Freq. Axis" className="w-[64px]" icon={
          <svg width="36" height="24"><path d="M.5.5h35v23H.5z" fill="#fff" stroke="#222" /><path d="M13.500 1v22M21.500 1v22M26.500 1v22M30.500 1v22M33.500 1v22" stroke="#aaa" /></svg>
        } />
        <Tool label="Limits" className="w-[46px]" icon={
          <svg width="36" height="24"><path d="M.5.5h35v23H.5z" fill="#fff" stroke="#222" /><path d="M18 2v20M2 12h32M15 5l3-3 3 3M15 19l3 3 3-3M6 9l-4 3 4 3M30 9l4 3-4 3" fill="none" stroke="#111" strokeWidth="1.500" /></svg>
        } />
        <Tool label="Controls" className="w-[54px]" icon={
          <svg width="32" height="32"><rect x="1" y="1" width="30" height="30" rx="4" fill="#bdbdbd" stroke="#777" strokeWidth="2" /><circle cx="16" cy="16" r="9.500" fill="#c8c8c8" stroke="#888" strokeWidth="3" strokeDasharray="3 2" /><circle cx="16" cy="16" r="7.500" fill="#b4b4b4" stroke="#888" /><circle cx="16" cy="16" r="3" fill="#ccc" stroke="#888" /></svg>
        } />
      </div>
    </div>
  )
}

function Magnifier({ plus }: { plus?: boolean }) {
  return (
    <button aria-label={plus ? 'Zoom in' : 'Zoom out'}>
      <svg width="14" height="18">
        <circle cx="7" cy="6" r="4.500" fill="#fff" />
        <circle cx="5" cy="13" r="3" fill="#14286e" />
        <path d={plus ? 'M3 13h4M5 11v4' : 'M3 13h4'} stroke="#fff" />
      </svg>
    </button>
  )
}

const SCALE = [
  { color: 'bg-[#ff0000]', flex: 'flex-2' },
  { color: 'bg-[#f57300]', flex: 'flex-4' },
  { color: 'bg-[#ebd700]', flex: 'flex-4' },
  { color: 'bg-[#a0c800]', flex: 'flex-4' },
  { color: 'bg-[#3cbe00]', flex: 'flex-4' },
  { color: 'bg-[#00b41e]', flex: 'flex-4' },
  { color: 'bg-[#00be82]', flex: 'flex-4' },
  { color: 'bg-[#009b9b]', flex: 'flex-4' },
  { color: 'bg-[#0050a0]', flex: 'flex-4' },
  { color: 'bg-[#0000a8]', flex: 'flex-4' },
  { color: 'bg-[#1c0082]', flex: 'flex-2' },
]

function ColourScale() {
  return (
    <div className="flex w-[84px] flex-col justify-center pl-1.5 leading-[14px]">
      <span className="w-[42px] text-center">82</span>
      <div className="flex h-3/5">
        <div className="relative flex w-[42px] flex-col border border-black">
          {SCALE.map(s => <span key={s.color} className={`${s.color} ${s.flex}`} />)}
          <div className="absolute inset-x-0 top-[5%] bottom-[7.5%] flex flex-col justify-between">
            {[80, 75, 70, 65, 60, 55, 50, 45].map(v => <span key={v} className="h-px bg-black" />)}
          </div>
        </div>
        <div className="relative flex-1">
          <div className="absolute top-[5%] bottom-[7.5%] left-0.5 -my-[7px] flex flex-col justify-between">
            {[80, 75, 70, 65, 60, 55, 50, 45].map(v => <span key={v}>{v}</span>)}
          </div>
        </div>
      </div>
      <span className="w-[42px] text-center">42</span>
    </div>
  )
}

function Graph() {
  return (
    <div className="flex min-h-0 flex-1">
      <div className="relative flex w-[45px] shrink-0 flex-col">
        <div className="-mb-[4px] flex flex-1 flex-col justify-between pt-[39px] pr-1.5 text-right leading-[14px]">
          {TIMES.map(t => <span key={t}>{t === 0 ? 0 : `${t}m`}</span>)}
        </div>
        <span className="absolute top-[57.8%] right-1 border border-[#1e1eaa] bg-white leading-[13px] text-[#1e1eaa]">296m</span>
      </div>
      <div className="relative min-w-0 flex-1 shadow-[0_0_3px_2px_#aaa]">
        <div className="absolute inset-0"><Spectrogram /></div>
        <div className="absolute top-0.5 left-0.5 flex w-[22px] flex-col items-center rounded-xs bg-[#b9a8cc]/80 py-0.5">
          <Magnifier plus />
          <Magnifier />
        </div>
        <button className={`absolute bottom-0.5 left-0.5 h-[21px] rounded-[4px] border border-[#999] px-1 ${FACE}`}>Generate</button>
        <div className="absolute right-[3px] bottom-0.5 flex flex-col items-end gap-[6px]">
          <button className={`h-4 w-[90px] rounded-[3px] leading-4 ${FACE}`}>10 .. 200</button>
          <button className={`h-4 w-[90px] rounded-[3px] leading-4 ${FACE}`}>20 .. 20.000</button>
          <div className="-mt-1 flex h-[21px] w-12 items-center justify-around rounded-xs bg-[#b9a8cc]/70">
            <Magnifier />
            <Magnifier plus />
          </div>
        </div>
        <ControlsPanel />
      </div>
      <ColourScale />
    </div>
  )
}

function GraphFooter() {
  return (
    <div className="pr-[84px] pl-[45px]">
      <div className="relative mt-[5px] h-[18px] leading-4">
        {HZ.map(hz => (
          <span key={hz} className="absolute -translate-x-1/2" style={{ left: `${xOfHz(hz) * 100}%` }}>{hz === 500 ? '500Hz' : hz}</span>
        ))}
        <span className="absolute left-[16.75%] -translate-x-1/2 border border-[#1e1eaa] bg-white px-px leading-[13px] text-[#1e1eaa]">34,23</span>
      </div>
      <div className="flex h-[15px] border border-[#8a8a8a] bg-white">
        <button aria-label="Scroll left" className={`grid w-3.5 place-items-center border-r border-[#8a8a8a] ${FACE}`}>
          <svg width="5" height="8"><path d="M5 0v8L0 4z" fill="#222" /></svg>
        </button>
        <div className="flex-238" />
        <div className={`flex-337 border-x border-[#8a8a8a] ${FACE}`} />
        <div className="flex-425" />
        <button aria-label="Scroll right" className={`grid w-3.5 place-items-center border-l border-[#8a8a8a] ${FACE}`}>
          <svg width="5" height="8"><path d="M0 0v8l5-4z" fill="#222" /></svg>
        </button>
      </div>
      <div className="mx-auto mt-[4px] flex h-[21px] w-[592px] items-center border border-[#888] bg-white pl-1 shadow-[1px_1px_2px_#888]">
        <Tick className="w-[158px] text-[#96141e]">Ausgangslage</Tick>
        <svg width="32" height="2"><path d="M0 1h32" stroke="#96141e" strokeWidth="2" /></svg>
        <span className="ml-[27px] w-[74px] text-[#96141e]">73,4 dB</span>
        <Tick className="w-[159px]">Peak energy time</Tick>
        <svg width="29" height="2"><path d="M0 1h29" stroke="#000" strokeWidth="2" strokeDasharray="7 4" /></svg>
        <span className="ml-[22px]">78,04 ms</span>
      </div>
    </div>
  )
}

export default function App() {
  return (
    <div className="flex min-h-screen flex-col bg-linear-to-b from-white via-[#f0f0f0] to-[#d2d2d2] text-[11px] text-black" style={{ fontFamily: '"Liberation Sans", Arial, sans-serif' }}>
      <header className="bg-white">
        <div className="flex h-[23px] items-center pr-0.5 pl-0.5">
          <svg width="16" height="16"><rect x=".5" y=".5" width="15" height="15" rx="2" fill="#dce4ec" stroke="#6c8ca8" /><path d="M8 2q-3 3 0 6M10 3q-3 2-1 5" fill="none" stroke="#d86030" strokeWidth="1.200" /><path d="M4 9h7q0 3-3 3t-4-3M3 13.500h9" fill="none" stroke="#5078a0" strokeWidth="1.200" /></svg>
          <span className="ml-[5px] flex-1 font-['Open_Sans',sans-serif] text-xs">REW V5,19</span>
          <button aria-label="Minimize" className="grid w-[45px] place-items-center"><svg width="10" height="10"><path d="M0 5.500h10" stroke="#000" /></svg></button>
          <button aria-label="Restore" className="grid w-[45px] place-items-center"><svg width="10" height="10" fill="none" stroke="#000"><path d="M.5 2.500h7v7h-7zM2.500 2.500v-2h7v7h-2" /></svg></button>
          <button aria-label="Close" className="grid w-[47px] place-items-center"><svg width="10" height="10"><path d="M0 0l10 10M10 0L0 10" stroke="#000" /></svg></button>
        </div>
        <nav className="flex h-[22px] items-center gap-[9px] pl-2.5 text-[#333]">
          {['File', 'Tools', 'Preferences', 'Graph', 'Help', 'Donate'].map(item => (
            <button key={item}><u>{item[0]}</u>{item.slice(1)}</button>
          ))}
        </nav>
      </header>
      <Toolbar />
      <div className="flex min-h-0 flex-1">
        <Sidebar />
        <div className="mt-[78px] mb-[67px] ml-[5px] flex w-4 shrink-0 flex-col border border-[#8a8a8a] bg-white">
          <button aria-label="Scroll up" className={`grid h-4 place-items-center border-b border-[#8a8a8a] ${FACE}`}>
            <svg width="8" height="5"><path d="M0 5h8L4 0z" fill="#333" /></svg>
          </button>
          <div className="flex-997" />
          <div className="h-7 border-y border-[#8a8a8a] bg-linear-to-r from-white to-[#c4c4c4]" />
          <div className="flex-90" />
          <button aria-label="Scroll down" className={`grid h-4 place-items-center border-t border-[#8a8a8a] ${FACE}`}>
            <svg width="8" height="5"><path d="M0 0h8L4 5z" fill="#333" /></svg>
          </button>
        </div>
        <main className="ml-[2px] flex min-w-0 flex-1 flex-col pb-[5px]">
          <GraphHeader />
          <Graph />
          <GraphFooter />
        </main>
      </div>
      <footer className="flex h-[27px] items-stretch border-t border-[#777] border-b-4 border-b-[#2c3a42] leading-[23px]">
        <span className="w-[78px] border-r border-[#777] pl-[3px]">287/492MB</span>
        <span className="w-14 border-r border-[#777] pl-1">44100 Hz</span>
        <span className="w-2.5 border-r border-[#777]" />
        <span className="flex-1" />
        <span className="w-[205px] border-l border-[#777]" />
      </footer>
    </div>
  )
}
